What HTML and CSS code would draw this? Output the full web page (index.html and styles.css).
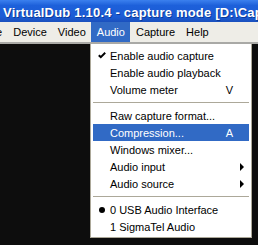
FILE: index.html
```html
<!DOCTYPE html>
<html lang="en">
<head>
    <meta charset="UTF-8">
    <title>VirtualDub - capture mode</title>
    <link rel="stylesheet" href="styles.css">
</head>
<body>
    <div class="window">
        <div class="titlebar">VirtualDub 1.10.4 - capture mode [D:\Capture.avi]</div>

        <div class="menubar">
            <span class="menu first">File</span>
            <span class="menu">Device</span>
            <span class="menu">Video</span>
            <span class="menu open">Audio</span>
            <span class="menu">Capture</span>
            <span class="menu">Help</span>
        </div>

        <div class="screen">
            <div class="dropdown">
                <div class="item">
                    <span class="mark">
                        <svg width="8" height="7" viewBox="0 0 8 7"><path d="M0.8 3.2 L2.8 5.2 L7.2 0.8" fill="none" stroke="#000" stroke-width="2"/></svg>
                    </span>
                    <span class="label">Enable audio capture</span>
                </div>
                <div class="item">
                    <span class="mark"></span>
                    <span class="label">Enable audio playback</span>
                </div>
                <div class="item">
                    <span class="mark"></span>
                    <span class="label">Volume meter</span>
                    <span class="key">V</span>
                </div>

                <div class="separator"></div>

                <div class="item">
                    <span class="mark"></span>
                    <span class="label">Raw capture format...</span>
                </div>
                <div class="item selected">
                    <span class="mark"></span>
                    <span class="label">Compression...</span>
                    <span class="key">A</span>
                </div>
                <div class="item">
                    <span class="mark"></span>
                    <span class="label">Windows mixer...</span>
                </div>
                <div class="item">
                    <span class="mark"></span>
                    <span class="label">Audio input</span>
                    <span class="arrow"></span>
                </div>
                <div class="item">
                    <span class="mark"></span>
                    <span class="label">Audio source</span>
                    <span class="arrow"></span>
                </div>

                <div class="separator"></div>

                <div class="item">
                    <span class="mark"><span class="bullet"></span></span>
                    <span class="label">0 USB Audio Interface</span>
                </div>
                <div class="item">
                    <span class="mark"></span>
                    <span class="label">1 SigmaTel Audio</span>
                </div>
            </div>
        </div>
    </div>
</body>
</html>
```

FILE: styles.css
```css
* {
    margin: 0;
    padding: 0;
    box-sizing: border-box;
}

body {
    background: #0d0d0d;
    font-family: "Liberation Sans", Arial, sans-serif;
    font-size: 11px;
    color: #000;
    overflow: hidden;
}

.window {
    width: 258px;
    height: 245px;
    display: flex;
    flex-direction: column;
}

.titlebar {
    height: 22px;
    padding-left: 3px;
    line-height: 25px;
    background: linear-gradient(#3b80ee, #1d60da 25%, #1c5cd5 75%, #1a50bd);
    color: #fff;
    font-size: 13px;
    font-weight: bold;
    letter-spacing: 0.2px;
    white-space: nowrap;
    overflow: hidden;
    text-shadow: 1px 1px 0 #0b3a9a;
}

.menubar {
    height: 22px;
    display: flex;
    background: #eeede7;
    border-bottom: 2px solid #a9a9a6;
}

.menu {
    padding: 0 5.5px;
    line-height: 20px;
    font-size: 11px;
}

.menu.first {
    margin-left: -21px;
}

.menu.open {
    background: #316ac5;
    color: #fff;
}

.screen {
    flex: 1;
    background: #0d0d0d;
    position: relative;
}

.dropdown {
    position: absolute;
    left: 90px;
    top: 0;
    width: 162px;
    padding: 2px;
    background: #fff;
    border: 1px solid #aca899;
    border-top: none;
    padding-top: 3px;
}

.item {
    height: 17px;
    display: flex;
    align-items: center;
    font-size: 11px;
}

.item.selected {
    background: #316ac5;
    color: #fff;
}

.mark {
    width: 17px;
    display: flex;
    justify-content: center;
    align-items: center;
    padding-left: 1px;
}

.bullet {
    width: 6px;
    height: 6px;
    border-radius: 50%;
    background: #000;
}

.label {
    flex: 1;
    white-space: nowrap;
}

.key {
    padding-right: 16px;
}

.arrow {
    width: 0;
    height: 0;
    margin-right: 5px;
    border-top: 4px solid transparent;
    border-bottom: 4px solid transparent;
    border-left: 4px solid #000;
}

.separator {
    height: 9px;
    display: flex;
    align-items: center;
}

.separator::before {
    content: "";
    flex: 1;
    height: 1px;
    background: #aca899;
}
```
